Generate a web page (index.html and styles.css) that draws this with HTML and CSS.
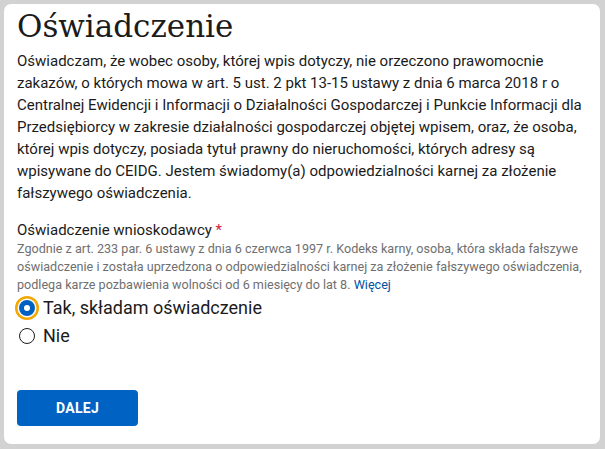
FILE: index.html
```html
<!DOCTYPE html>
<html lang="pl">
<head>
<meta charset="utf-8">
<link rel="stylesheet" href="styles.css">
</head>
<body>
<div class="card">
  <h1 class="title">Oświadczenie</h1>
  <p class="lead">Oświadczam, że wobec osoby, której wpis dotyczy, nie orzeczono prawomocnie zakazów, o których mowa w art. 5 ust. 2 pkt 13-15 ustawy z dnia 6 marca 2018 r o Centralnej Ewidencji i Informacji o Działalności Gospodarczej i Punkcie Informacji dla Przedsiębiorcy w zakresie działalności gospodarczej objętej wpisem, oraz, że osoba, której wpis dotyczy, posiada tytuł prawny do nieruchomości, których adresy są wpisywane do CEIDG. Jestem świadomy(a) odpowiedzialności karnej za złożenie fałszywego oświadczenia.</p>
  <div class="field">
    <div class="label">Oświadczenie wnioskodawcy <span class="req">*</span></div>
    <div class="hint">Zgodnie z art. 233 par. 6 ustawy z dnia 6 czerwca 1997 r. Kodeks karny, osoba, która składa fałszywe oświadczenie i została uprzedzona o odpowiedzialności karnej za złożenie fałszywego oświadczenia, podlega karze pozbawienia wolności od 6 miesięcy do lat 8. <a class="more" href="#">Więcej</a></div>
    <label class="opt"><span class="radio checked"></span>Tak, składam oświadczenie</label>
    <label class="opt"><span class="radio"></span>Nie</label>
  </div>
  <button class="btn">DALEJ</button>
</div>
</body>
</html>
```
FILE: styles.css
```css
html, body { margin: 0; padding: 0; }
body {
  background: #d2d2d2;
  width: 605px;
  height: 449px;
  padding: 4px 5px 5px 4px;
  box-sizing: border-box;
  font-family: Roboto, "Noto Sans", sans-serif;
}
.card {
  background: #fff;
  border-radius: 7px;
  height: 440px;
  box-sizing: border-box;
  padding: 0 13px 0 13px;
  color: #1b1b1b;
}
.title {
  font-family: "DejaVu Serif", "Liberation Serif", serif;
  font-weight: normal;
  font-size: 31px;
  line-height: 40px;
  margin: 0;
  padding-top: 2px;
  letter-spacing: 0;
}
.lead {
  margin: 4px 0 0 0;
  font-size: 15px;
  line-height: 22px;
  width: 570px;
}
.field { margin-top: 16px; }
.label { font-size: 15px; line-height: 20px; }
.req { color: #d4213d; }
.hint {
  font-size: 12.6px;
  line-height: 18px;
  color: #6f6f6f;
  margin-top: 0;
}
.more { color: #0052a5; text-decoration: none; }
.opt {
  display: flex;
  align-items: center;
  font-size: 18px;
  line-height: 28px;
  gap: 8px;
}
.radio {
  width: 16px;
  height: 16px;
  border: 1.5px solid #1b1b1b;
  border-radius: 50%;
  box-sizing: border-box;
  margin-left: 2px;
  flex: none;
}
.radio.checked {
  background: #0061c2;
  border: 5px solid #0061c2;
  box-shadow: 0 0 0 1.5px #fff, 0 0 0 4px #f4a700;
  position: relative;
}
.radio.checked::after {
  content: "";
  position: absolute;
  left: 0; top: 0;
  width: 6px; height: 6px;
  background: #fff;
  border-radius: 50%;
}
.btn {
  display: block;
  margin-top: 40px;
  width: 121px;
  height: 36px;
  background: #0062c2;
  color: #fff;
  border: none;
  border-radius: 4px;
  font-family: Roboto, sans-serif;
  font-weight: 700;
  font-size: 14px;
  letter-spacing: 0.3px;
}
```
